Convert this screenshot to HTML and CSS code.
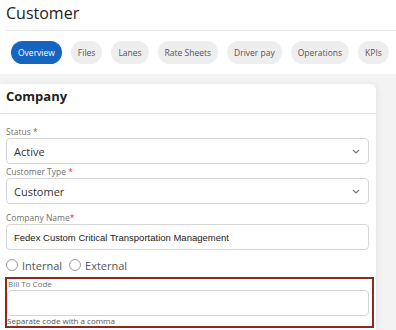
FILE: index.html
```html
<!DOCTYPE html>
<html>
<head>
    <title>Customer</title>
    <meta charset="UTF-8">
    <link rel="stylesheet" href="styles.css">
</head>
<body>

    <div class="page-header">
        <h1>Customer</h1>
        <div class="tabs">
            <span class="tab active">Overview</span>
            <span class="tab">Files</span>
            <span class="tab">Lanes</span>
            <span class="tab">Rate Sheets</span>
            <span class="tab">Driver pay</span>
            <span class="tab">Operations</span>
            <span class="tab">KPIs</span>
        </div>
    </div>

    <div class="card">
        <div class="card-title">Company</div>
        <div class="card-body">
            <label class="field-label">Status <span class="req">*</span></label>
            <div class="select">
                <span>Active</span>
                <svg class="chevron" width="8" height="5" viewBox="0 0 8 5"><path d="M1 1 L4 4 L7 1" fill="none" stroke="#777" stroke-width="1.1"/></svg>
            </div>

            <label class="field-label">Customer Type <span class="req">*</span></label>
            <div class="select">
                <span>Customer</span>
                <svg class="chevron" width="8" height="5" viewBox="0 0 8 5"><path d="M1 1 L4 4 L7 1" fill="none" stroke="#777" stroke-width="1.1"/></svg>
            </div>

            <label class="field-label spaced">Company Name<span class="req">*</span></label>
            <div class="text-input name-input">Fedex Custom Critical Transportation Management</div>

            <div class="radios">
                <span class="radio"><span class="circle"></span>Internal</span>
                <span class="radio"><span class="circle"></span>External</span>
            </div>

            <div class="highlight">
                <label class="field-label">Bill To Code</label>
                <div class="text-input"></div>
                <div class="hint">Separate code with a comma</div>
            </div>
        </div>
    </div>

</body>
</html>
```

FILE: styles.css
```css
body {
    font-family: "Open Sans", sans-serif;
    background-color: #f3f3f3;
    margin: 0;
    color: #333;
}
.page-header {
    background: white;
    padding: 0 0 10px 0;
}
h1 {
    margin: 0 0 0 6px;
    padding: 2px 0 6px 0;
    height: 22px;
    line-height: 22px;
    font-size: 16px;
    font-weight: 500;
    color: #222;
    border-bottom: 1px solid #e6e6e6;
}
.tabs {
    display: flex;
    gap: 9px;
    padding: 10px 0 0 11px;
    white-space: nowrap;
}
.tab {
    background-color: #eeeeee;
    color: #555;
    font-size: 8.5px;
    height: 23px;
    line-height: 23px;
    padding: 0 7px;
    border-radius: 12px;
}
.tab.active {
    background-color: #1565c0;
    color: white;
}
.card {
    box-sizing: border-box;
    margin-top: 10px;
    width: 376px;
    height: 246px;
    background: white;
    border-radius: 0 6px 0 0;
    box-shadow: 2px 0px 6px rgba(0,0,0,0.06);
}
.card-title {
    font-size: 13px;
    font-weight: 700;
    color: #222;
    padding: 3px 6px 0 6px;
    height: 26px;
    border-bottom: 1px solid #e4e4e4;
}
.card-body {
    padding: 12px 7px 0 6px;
}
.field-label {
    display: block;
    font-size: 8.5px;
    line-height: 11px;
    color: #707070;
    margin-bottom: 1px;
}
.field-label.spaced {
    margin-top: 8px;
}
.req {
    color: #e53935;
}
.select, .text-input {
    box-sizing: border-box;
    height: 26px;
    border: 1px solid #d6d6d6;
    border-radius: 4px;
    display: flex;
    align-items: center;
    justify-content: space-between;
    padding: 0 8px 0 7px;
    font-size: 11px;
    color: #333;
    margin-bottom: 2px;
}
.name-input {
    font-family: "Liberation Sans", Arial, sans-serif;
    font-size: 9.5px;
    color: #222;
}
.radios {
    display: flex;
    gap: 7px;
    height: 14px;
    font-size: 11px;
    color: #555;
    margin: 8px 0 5px 0;
}
.radio {
    display: flex;
    align-items: center;
    gap: 4px;
}
.circle {
    box-sizing: border-box;
    width: 12px;
    height: 12px;
    border: 1px solid #999;
    border-radius: 50%;
}
.highlight {
    border: 2px solid #8b2a20;
    margin: 0 -5px 0 -1px;
    padding: 0 3px 0 0;
}
.highlight .field-label {
    font-size: 8px;
    line-height: 10px;
    padding-left: 1px;
}
.highlight .text-input {
    margin-bottom: 0;
}
.hint {
    font-size: 8px;
    line-height: 10px;
    color: #555;
}
```
